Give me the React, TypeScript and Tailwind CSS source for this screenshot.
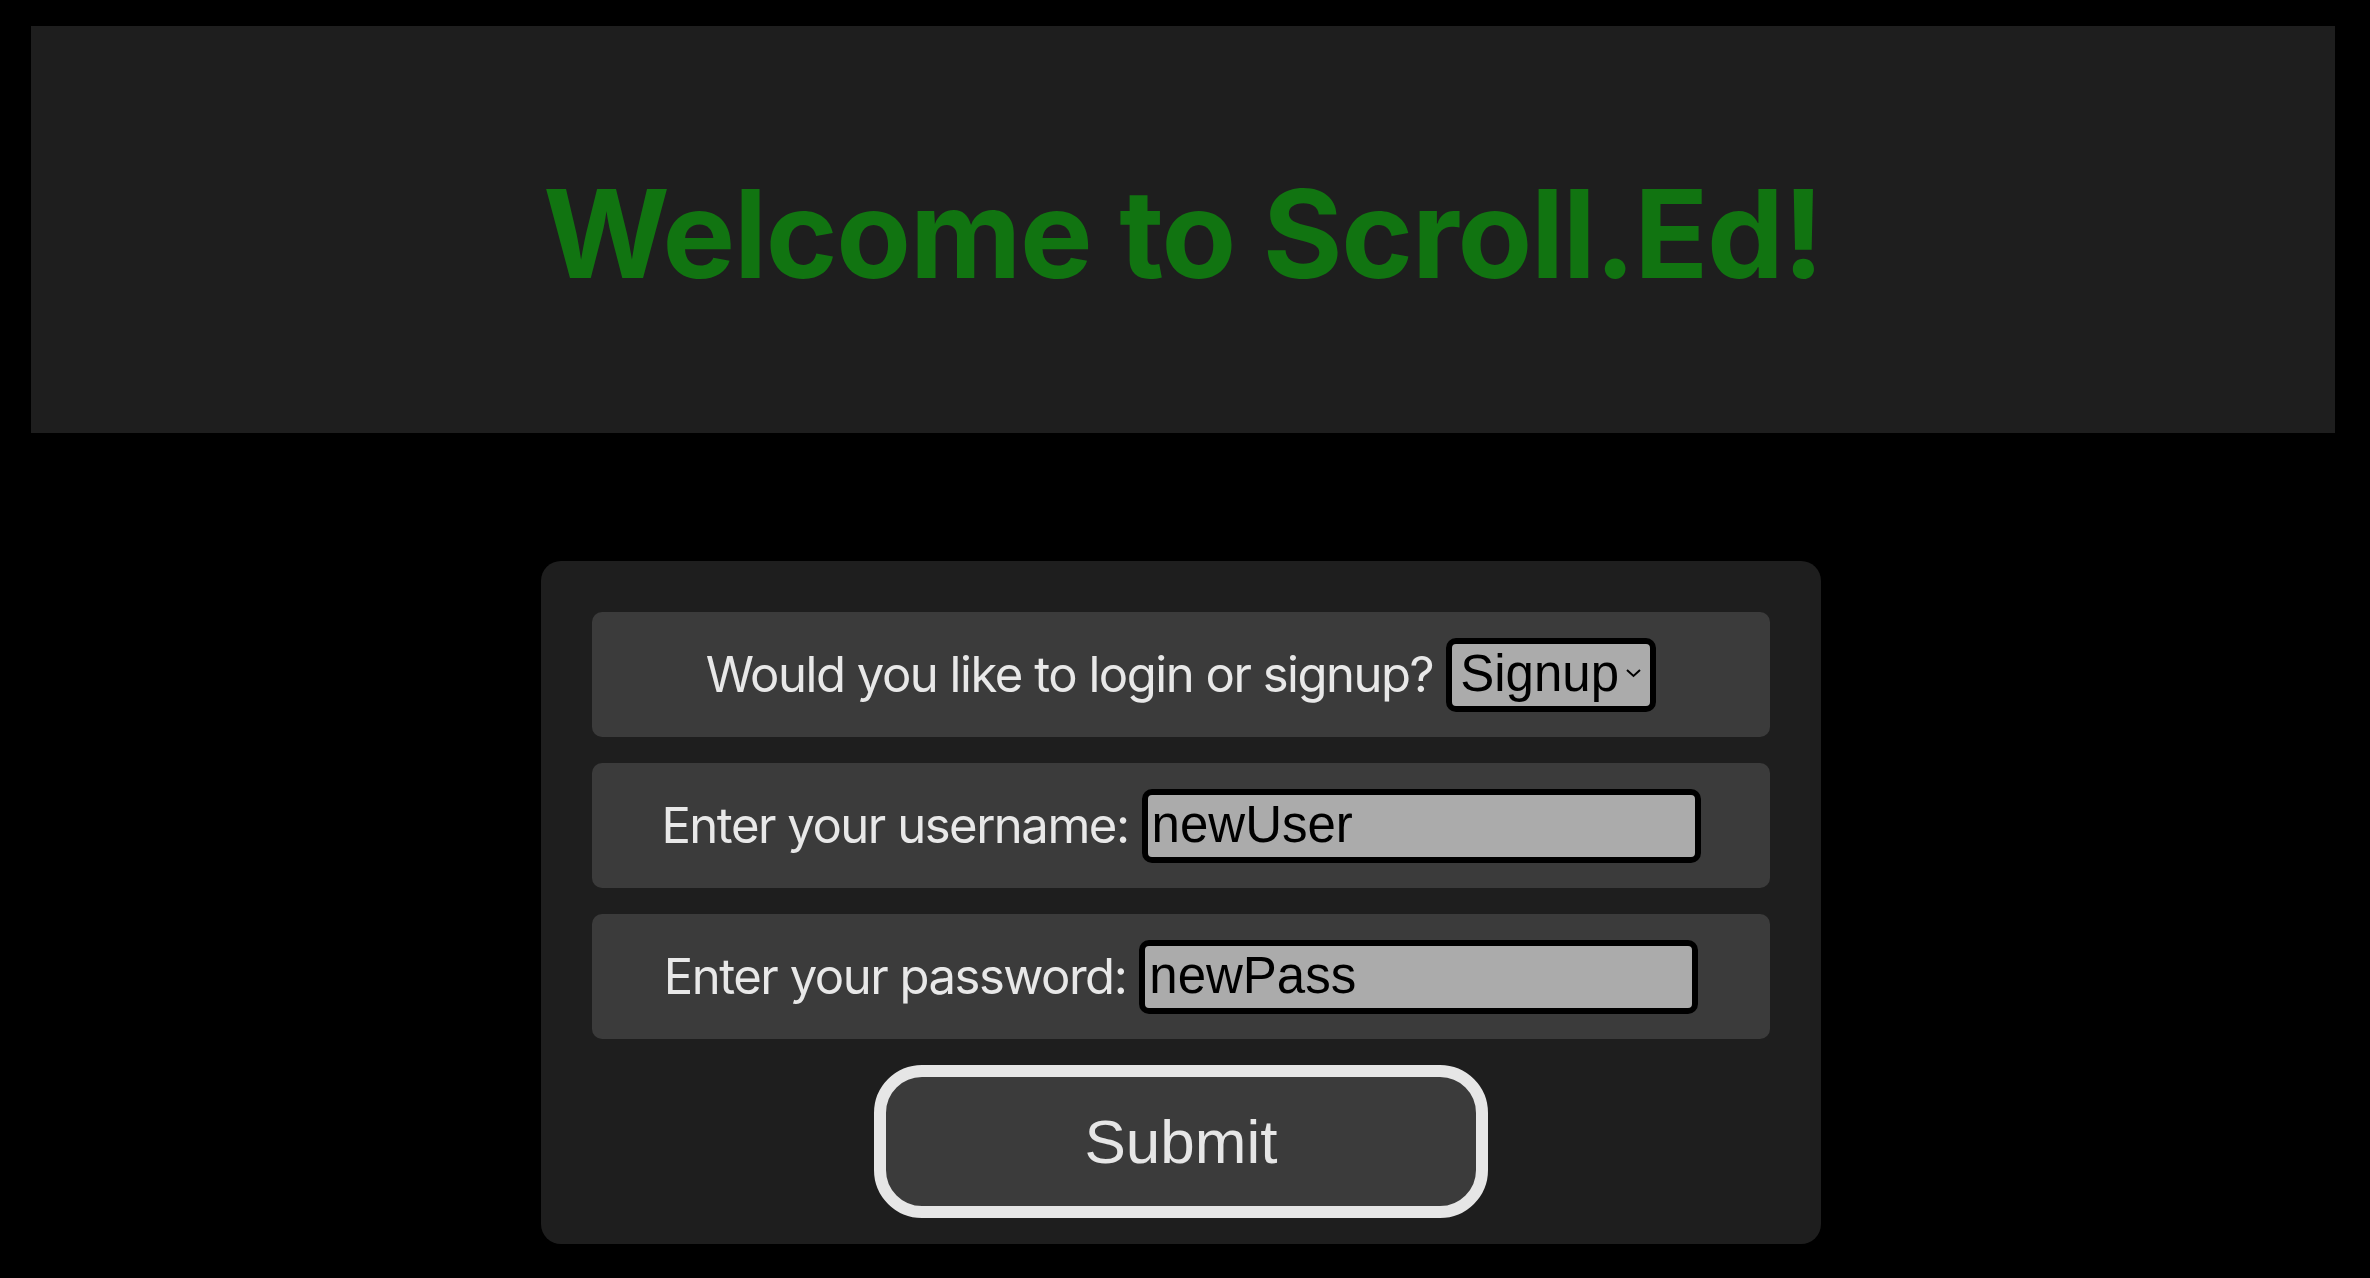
import { useState } from "react";

const rowClass =
  "flex h-[125px] items-center justify-center gap-[13px] rounded-[10px] bg-[#3b3b3b]";
const labelClass =
  "font-['Inter','Noto_Sans',sans-serif] text-[49px] tracking-[-0.03em] text-[#e8e8e8] leading-none";
const fieldClass =
  "h-[74px] rounded-[10px] border-[6px] border-black bg-[#ababab] font-['Liberation_Sans','Arial',sans-serif] text-[51px] text-black outline-none";

const App = () => {
  const [mode, setMode] = useState("signup");
  const [username, setUsername] = useState("newUser");
  const [password, setPassword] = useState("newPass");

  return (
    <div className="min-h-screen bg-black pl-[31px] pr-[35px] pt-[26px] pb-[33px]">
      <header className="flex h-[407px] items-center justify-center bg-[#1e1e1e] pt-[8px]">
        <h1 className="font-['Inter','Noto_Sans',sans-serif] text-[122px] font-bold leading-none tracking-[-0.01em] text-[#117411]">
          Welcome to Scroll.Ed!
        </h1>
      </header>

      <main className="mx-auto mt-[128px] flex w-[1280px] flex-col gap-[26px] rounded-[20px] bg-[#1e1e1e] p-[51px] pb-[26px] -translate-x-[2px]">
        <div className={rowClass}>
          <span className={labelClass}>Would you like to login or signup?</span>
          <div className="relative">
            <select
              value={mode}
              onChange={(e) => setMode(e.target.value)}
              className={`${fieldClass} w-[210px] appearance-none pl-[8px] pr-[30px] pt-0 pb-[2px] leading-[56px]`}
            >
              <option value="login">Login</option>
              <option value="signup">Signup</option>
            </select>
            <svg
              className="pointer-events-none absolute right-[14px] top-[30px]"
              width="17"
              height="10"
              viewBox="0 0 17 10"
              fill="none"
            >
              <path d="M2 2l6.5 6 6.5-6" stroke="black" strokeWidth="2" />
            </svg>
          </div>
        </div>

        <div className={rowClass}>
          <span className={labelClass}>Enter your username:</span>
          <input
            type="text"
            value={username}
            onChange={(e) => setUsername(e.target.value)}
            className={`${fieldClass} w-[559px] px-[4px]`}
          />
        </div>

        <div className={rowClass}>
          <span className={labelClass}>Enter your password:</span>
          <input
            type="text"
            value={password}
            onChange={(e) => setPassword(e.target.value)}
            className={`${fieldClass} w-[559px] px-[4px]`}
          />
        </div>

        <button className="mx-auto h-[153px] w-[614px] rounded-[48px] border-[12px] border-[#e6e6e6] bg-[#3b3b3b] font-['Liberation_Sans','Arial',sans-serif] text-[62px] text-[#e6e6e6]">
          Submit
        </button>
      </main>
    </div>
  );
};

export default App;
